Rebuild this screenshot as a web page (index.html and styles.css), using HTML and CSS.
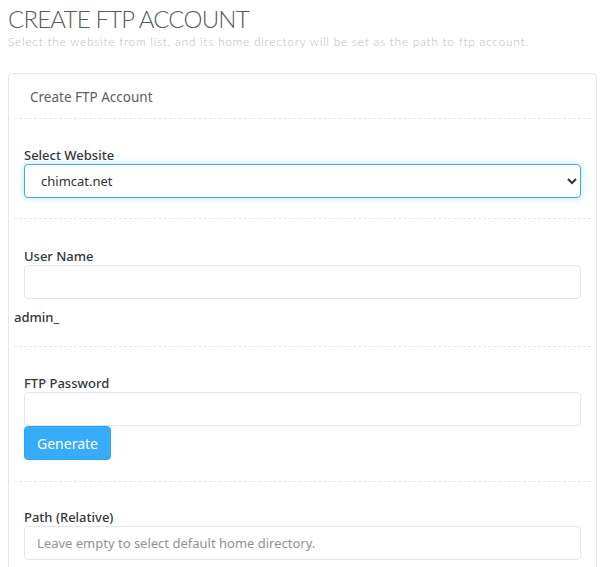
FILE: index.html
```html
<!DOCTYPE html>
<html>
<head>
<meta charset="utf-8">
<link rel="stylesheet" href="styles.css">
</head>
<body>
<div class="page">
  <h1 class="title">CREATE FTP ACCOUNT</h1>
  <p class="subtitle">Select the website from list, and its home directory will be set as the path to ftp account.</p>
  <div class="card">
    <div class="card-head">Create FTP Account</div>
    <div class="section s1">
      <div class="group">
        <label class="label">Select Website</label>
        <select class="select">
          <option>chimcat.net</option>
        </select>
      </div>
    </div>
    <div class="section s2">
      <div class="group">
        <label class="label">User Name</label>
        <input class="input" type="text">
      </div>
      <div class="prefix">admin_</div>
    </div>
    <div class="section s3">
      <div class="group">
        <label class="label">FTP Password</label>
        <input class="input" type="password">
        <button class="btn">Generate</button>
      </div>
    </div>
    <div class="section s4">
      <div class="group">
        <label class="label">Path (Relative)</label>
        <input class="input" type="text" placeholder="Leave empty to select default home directory.">
      </div>
    </div>
  </div>
</div>
</body>
</html>
```

FILE: styles.css
```css
html, body {
  margin: 0;
  padding: 0;
  background: #ffffff;
}
.page {
  padding: 4px 6px 0 8px;
  font-family: "Noto Sans", "Open Sans", sans-serif;
}
.title {
  margin: 0;
  font-family: "Lato", "Open Sans", sans-serif;
  font-weight: 300;
  font-size: 24px;
  line-height: 30px;
  color: #555a60;
  letter-spacing: -0.8px;
}
.subtitle {
  margin: 0;
  font-family: "Lato", "Open Sans", sans-serif;
  font-weight: 300;
  font-size: 12px;
  line-height: 16px;
  color: #b8bcc0;
  letter-spacing: 0.7px;
}
.card {
  margin-top: 23px;
  border: 1px solid #e1e6ec;
  border-radius: 5px;
  padding: 0 5px;
  min-height: 520px;
}
.card-head {
  height: 45px;
  box-sizing: border-box;
  padding: 13px 0 0 16px;
  font-size: 13.5px;
  line-height: 20px;
  color: #5a5e63;
  border-bottom: 1px dashed #e3e7ec;
}
.section {
  border-bottom: 1px dashed #e3e7ec;
}
.s1 { padding: 27px 0 20px; }
.s2 { padding: 28px 0 19px; }
.s3 { padding: 27px 0 21px; }
.s4 { padding: 26px 0 20px; border-bottom: none; }
.group {
  padding: 0 10px;
  display: flex;
  flex-direction: column;
  align-items: flex-start;
}
.label {
  font-size: 13px;
  line-height: 18px;
  font-weight: 500;
  color: #33373b;
}
.select, .input {
  box-sizing: border-box;
  width: 100%;
  height: 34px;
  border-radius: 4px;
  font-family: "Noto Sans", "Open Sans", sans-serif;
  font-size: 13px;
  color: #333;
  background: #fff;
  outline: none;
  margin: 0;
}
.select {
  border: 1px solid #3da8f5;
  box-shadow: 0 0 6px rgba(61, 168, 245, 0.35);
  padding: 0 8px 0 12px;
}
.input {
  border: 1px solid #dfe5ec;
  padding: 0 12px;
}
.input::placeholder {
  color: #8e9297;
}
.prefix {
  font-size: 13px;
  line-height: 20px;
  font-weight: 500;
  color: #33373b;
  margin-top: 8px;
}
.btn {
  height: 34px;
  box-sizing: border-box;
  padding: 0 12px;
  border: 1px solid #2ea3f2;
  border-radius: 4px;
  background: #36acfb;
  color: #fff;
  font-family: "Noto Sans", "Open Sans", sans-serif;
  font-size: 14px;
  margin: 0;
}
```
